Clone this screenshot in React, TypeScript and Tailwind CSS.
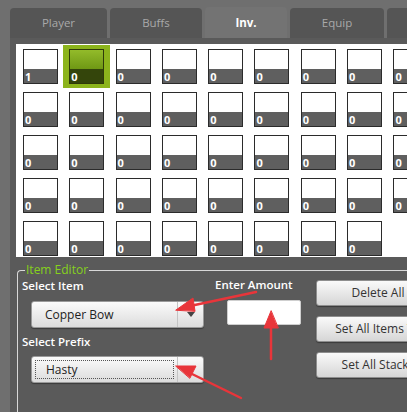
import React from 'react';

const tabs = [
  { label: 'Player', w: 97 },
  { label: 'Buffs', w: 92 },
  { label: 'Inv.', w: 82, active: true },
  { label: 'Equip', w: 94 },
  { label: '', w: 60 },
];

// 5 rows x 9 columns, last row has 8 slots
const slots = Array.from({ length: 44 }, (_, i) => ({ id: i, count: i === 0 ? 1 : 0 }));

const Slot: React.FC<{ count: number; selected?: boolean }> = ({ count, selected }) => (
  <div className="relative w-[35px] h-[35px]">
    {selected && <div className="absolute -left-[6px] -top-[4px] w-[47px] h-[43px] bg-[#8cb41c]" />}
    <div className={`relative w-full h-full flex flex-col border ${selected ? 'border-[#2f3a0a]' : 'border-[#2b2b2b]'}`}>
      <div className={`flex-1 ${selected ? 'bg-gradient-to-b from-[#93bb2a] to-[#6f9814]' : 'bg-white'}`} />
      <div className={`h-[14px] flex items-end pl-[1px] ${selected ? 'bg-[#34450b]' : 'bg-[#5f5f5f]'}`}>
        <span className="text-white text-[11px] font-bold leading-[13px]">{count}</span>
      </div>
    </div>
  </div>
);

const Combo: React.FC<{ value: string; focused?: boolean }> = ({ value, focused }) => (
  <div className="ml-[9px] w-[173px] h-[27px] rounded-[3px] border border-[#9a9a9a] bg-gradient-to-b from-[#fbfbfb] to-[#dcdcdc] shadow-[0_1px_1px_rgba(0,0,0,0.35)] flex items-stretch">
    <div className={`flex-1 flex items-center pl-[10px] m-[3px] ${focused ? 'border border-dotted border-[#555]' : ''}`}>
      <span className="text-[12px] text-[#222]">{value}</span>
    </div>
    <div className="w-[26px] border-l border-[#c4c4c4] flex items-center justify-center">
      <svg width="8" height="5" viewBox="0 0 8 5"><path d="M0 0h8L4 5z" fill="#444" /></svg>
    </div>
  </div>
);

const SideButton: React.FC<{ label: string }> = ({ label }) => (
  <div className="w-[124px] h-[26px] rounded-[3px] border border-[#8e8e8e] bg-gradient-to-b from-[#fafafa] to-[#d6d6d6] shadow-[0_1px_1px_rgba(0,0,0,0.35)] flex items-center justify-center">
    <span className="text-[12px] text-[#333] whitespace-nowrap">{label}</span>
  </div>
);

export default function App() {
  return (
    <div className="relative w-[407px] h-[412px] overflow-hidden bg-[#6f6f6f] font-['Open_Sans',sans-serif]">
      {/* Tabs */}
      <div className="flex items-end gap-[3px] pl-[10px] h-[38px]">
        {tabs.map((t, i) => (
          <div
            key={i}
            style={{ width: t.w }}
            className={`shrink-0 rounded-t-[4px] flex items-center justify-center ${
              t.active ? 'h-[31px] bg-[#737373] text-white font-bold' : 'h-[30px] bg-[#555555] text-[#a9a9a9]'
            } text-[11.5px]`}
          >
            {t.label}
          </div>
        ))}
      </div>

      {/* Body */}
      <div className="ml-[10px] bg-[#5a5a5a] pt-[6px] pl-[6px] h-[374px] flex flex-col">
        <div className="bg-white h-[213px] pt-[5px] pl-[7px]">
          <div className="grid grid-cols-[repeat(9,35px)] gap-x-[11.3px] gap-y-[8px]">
            {slots.map(s => (
              <Slot key={s.id} count={s.count} selected={s.id === 1} />
            ))}
          </div>
        </div>

        {/* Item Editor */}
        <fieldset className="mt-[6px] ml-[1px] border-l border-t border-[#d8d8d8] rounded-tl-[4px] flex-1 pl-[4px]">
          <legend className="ml-[3px] px-[1px] text-[12px] leading-[14px] text-[#86d11c]">Item Editor</legend>
          <div className="flex">
            <div className="w-[190px]">
              <div className="text-white text-[11.5px] font-semibold leading-[16px] mt-[1px]">Select Item</div>
              <div className="mt-[7px]">
                <Combo value="Copper Bow" />
              </div>
              <div className="text-white text-[11.5px] font-semibold leading-[16px] mt-[6px]">Select Prefix</div>
              <div className="mt-[6px]">
                <Combo value="Hasty" focused />
              </div>
            </div>
            <div className="w-[104px] flex flex-col">
              <div className="text-white text-[11.5px] font-semibold leading-[16px] mt-[0px] pl-[3px]">Enter Amount</div>
              <div className="mt-[7px] ml-[15px] w-[74px] h-[25px] bg-white border border-[#cfcfcf] rounded-[2px]" />
            </div>
            <div className="flex flex-col gap-[10px] mt-[3px]">
              <SideButton label="Delete All" />
              <SideButton label="Set All Items To" />
              <SideButton label="Set All Stacks" />
            </div>
          </div>
        </fieldset>
      </div>

      {/* Red annotation arrows */}
      <svg className="absolute inset-0 pointer-events-none" width="407" height="412" viewBox="0 0 407 412">
        <g fill="#e8353a" stroke="#e8353a" strokeLinecap="round">
          <path d="M256 292 L190 306" strokeWidth="2.5" />
          <path d="M176 310 L193 298 L195 311 Z" />
          <path d="M271 359 L271 325" strokeWidth="2.5" />
          <path d="M271 311 L264 328 L278 328 Z" />
          <path d="M241 398 L190 373" strokeWidth="2.5" />
          <path d="M176 366 L196 366 L190 378 Z" />
        </g>
      </svg>
    </div>
  );
}
